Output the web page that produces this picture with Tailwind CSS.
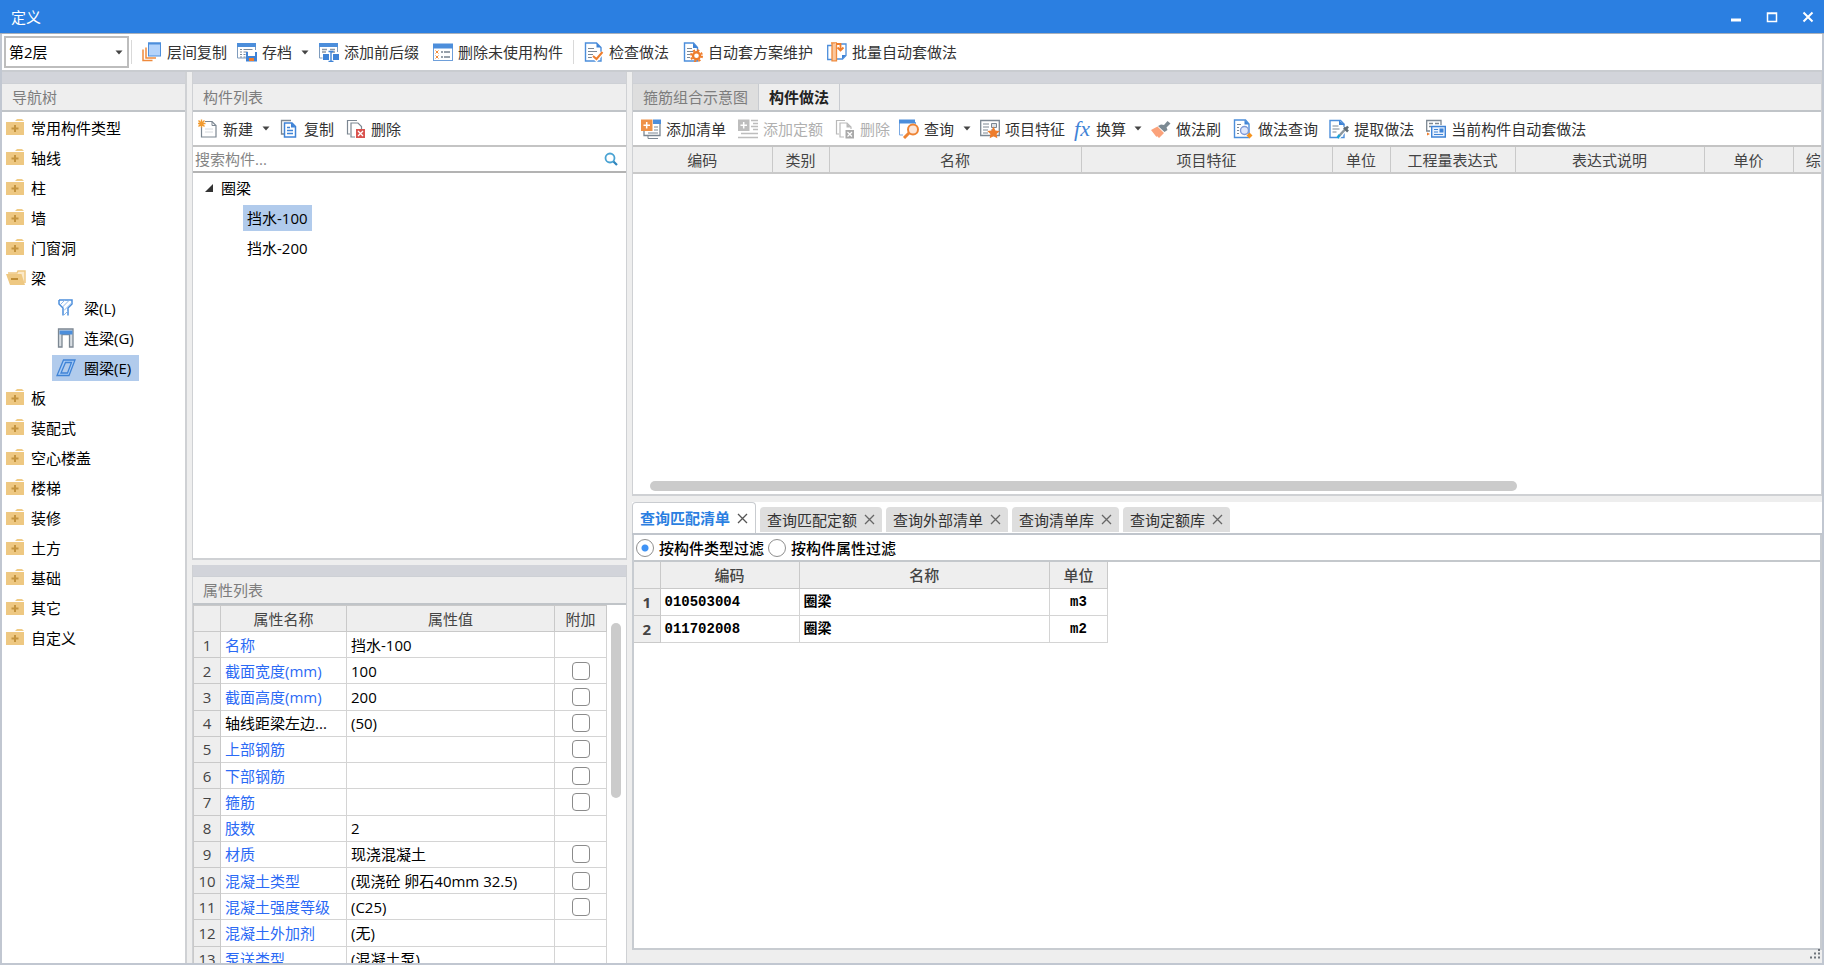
<!DOCTYPE html>
<html lang="zh-CN">
<head>
<meta charset="utf-8">
<title>定义</title>
<script src="https://cdn.jsdelivr.net/npm/@tailwindcss/browser@4"></script>
</head>
<body class="h-screen flex flex-col overflow-hidden bg-[#eeeeee] font-['Open_Sans','Noto_Sans_CJK_SC',sans-serif] text-[15px] leading-5 text-[#333333] whitespace-nowrap">

<svg class="hidden" aria-hidden="true">
  <symbol id="i-floors" viewBox="0 0 20 20"><path d="M1 7.500v11h9.500M4 5.500v10.500h10" fill="none" stroke="#ef8a3c" stroke-width="1.500"/><rect x="6.500" y="1" width="12" height="13" fill="#b3d3fb" stroke="#4c8edb"/><path d="M6 1.500h13" stroke="#4c8edb" stroke-width="2"/></symbol>
  <symbol id="i-archive" viewBox="0 0 20 20"><path d="M.5 1v15h9M18.500 1v7" fill="none" stroke="#7f9cbd"/><rect y="1" width="19" height="4" fill="#4c8edb"/><path d="M3 7.500h2M6.500 7.500h9M3 10h2M6.500 10h4M3 12.500h2M6.500 12.500h2M3 15h2M6.500 15h2" stroke="#7c8a99"/><path d="M9 10h11v9.500H9z" fill="#3f83d6"/><path d="M11 10h7v4h-7z" fill="#fff"/><path d="M12 16h5v3h-5z" fill="#ee7d2c"/></symbol>
  <symbol id="i-affix" viewBox="0 0 20 20"><path d="M.5 1v15h3M18.500 1v9" fill="none" stroke="#7f9cbd"/><rect y="1" width="19" height="4" fill="#4c8edb"/><path d="M3 7.500h5M11 7.500h5M3 10h4M12 10h4" stroke="#8d98a5" stroke-width="1.300"/><path d="M4 12h6v6H4zM14 12h6v6h-6z" fill="#3f83d6"/><path d="M12 10v9M9.500 9.500h5M9.500 19.500h5" stroke="#3f83d6" stroke-width="1.400"/></symbol>
  <symbol id="i-unused" viewBox="0 0 20 20"><rect x=".5" y="2.500" width="19" height="16" fill="#fff" stroke="#6e9fda"/><rect y="1.500" width="20" height="5" fill="#4c8edb"/><path d="m2.500 8.500 3 3m0-3-3 3m0 2 3 3m0-3-3 3" stroke="#f08a3a"/><path d="M8 10h2M11 10h6M8 15h2M11 15h6" stroke="#77828f" stroke-width="1.400"/></symbol>
  <symbol id="i-check" viewBox="0 0 20 20"><path d="M1.500 1h11l4.500 4.500V19H1.500z" fill="#fff" stroke="#4c8edb" stroke-width="1.400"/><path d="M12.500 1v4.500H17z" fill="#3f83d6"/><path d="M4 6.500h6M4 9.500h9M4 12.500h5M4 15.500h4" stroke="#7b8794"/><path d="m9 14 3.500 3.500 6-7" fill="none" stroke="#fff" stroke-width="4"/><path d="m9 14 3.500 3 6-7" fill="none" stroke="#ee7d2c" stroke-width="2"/></symbol>
  <symbol id="i-gear" viewBox="0 0 20 20"><path d="M1.500 1h9l4 4.500V19h-13z" fill="#fff" stroke="#4c8edb" stroke-width="1.400"/><path d="M10 1v5h5z" fill="#3f83d6"/><path d="M4 6.500h5M4 9.500h6M4 12.500h3M4 15.500h3" stroke="#7b8794"/><circle cx="13.500" cy="13.800" r="5.500" fill="none" stroke="#ee7d2c" stroke-width="2" stroke-dasharray="2.200 2.120"/><circle cx="13.500" cy="13.800" r="3.500" fill="#fff" stroke="#ee7d2c" stroke-width="2.400"/></symbol>
  <symbol id="i-batch" viewBox="0 0 20 20"><path d="M5 3.500H.7v14H5M9 2h10v11.500L15.500 17H9" fill="#fff" stroke="#4c8edb" stroke-width="1.300"/><path d="M15 17v-4h4z" fill="#3f83d6"/><path d="M4 .8h6M7 .8h-2v18h4.500v-16" fill="#fbc79c" stroke="#ef8a3c" stroke-width="1.300"/><path d="M9 2h4.500v5M10.500 5.500l3 3 3-3" fill="none" stroke="#ee7d2c" stroke-width="1.800"/></symbol>
  <symbol id="i-new" viewBox="0 0 20 20"><path d="M3.500 2.500H14l4 4V18H3.500z" fill="#fff" stroke="#7c8792" stroke-width="1.200"/><path d="M14 2.500v4h4" fill="none" stroke="#7c8792"/><path d="M7 10h8M7 13h8" stroke="#d6dade"/><path d="M0 1h7v6.500H0z" fill="#fff"/><path d="m.5 1.500 6 6m0-6-6 6M3.500.5v8M-.5 4.500h8" stroke="#f29a2e" stroke-width="1.400"/></symbol>
  <symbol id="i-copy" viewBox="0 0 20 20"><path d="M5 15H2.500V1.500H12" fill="none" stroke="#7c8792" stroke-width="1.300"/><path d="M5.500 4h7.500l3.500 3.500V18h-11z" fill="#fff" stroke="#3f83d6" stroke-width="1.500"/><path d="M12 3.500v5h5z" fill="#3f83d6"/><path d="M8 8.500h3M8 11.500h6M8 14.500h6" stroke="#3f83d6" stroke-width="1.300"/></symbol>
  <symbol id="i-del" viewBox="0 0 20 20"><path d="M4 15H1.500V1.500H11" fill="none" stroke="#7c8792" stroke-width="1.200"/><path d="M9 18H5V4h7l3.500 3.500V10" fill="#fff" stroke="#7c8792" stroke-width="1.200"/><path d="M10 10h9v9h-9z" fill="#d9534f"/><path d="m12 12 5 5m0-5-5 5" stroke="#fff" stroke-width="1.300"/></symbol>
  <symbol id="i-delx" viewBox="0 0 20 20"><path d="M4 15H1.500V1.500H10" fill="none" stroke="#b9b9b9" stroke-width="1.200"/><path d="M9 18H5V4h7l4 4v2" fill="#fff" stroke="#b9b9b9" stroke-width="1.200"/><path d="M11.500 4v4.500H16z" fill="#b9b9b9"/><path d="M10.500 11h8.500v8.500h-8.500z" fill="#a9a9a9"/><path d="m12.500 13 4.500 4.500m0-4.500-4.500 4.500" stroke="#fff" stroke-width="1.200"/></symbol>
  <symbol id="i-addlist" viewBox="0 0 20 20"><path d="M7 16v3.500h10" fill="none" stroke="#7c8792"/><path d="M3 11v5.500h16V4" fill="#fff" stroke="#7c8792" stroke-width="1.300"/><path d="M12 .5h8V5h-8z" fill="#4c8edb"/><path d="M13 8h4M13 11h4M7 14h10" stroke="#7c8792"/><path d="M0 .5h11.500V12H0z" fill="#ef9146"/><path d="M5.700 3v6.500M2.500 6.200H9" stroke="#fff" stroke-width="1.500"/></symbol>
  <symbol id="i-addquota" viewBox="0 0 20 20"><path d="M0 .5h11.500V12H0z" fill="#bdbdbd"/><path d="M5.700 3v6.500M2.500 6.200H9" stroke="#fff" stroke-width="1.500"/><path d="M13 1.500h7M15 4.500h5M13 7.500h7M15 10.500h5M3 14.500h17M0 18.500h20" stroke="#bdbdbd" stroke-width="1.400"/></symbol>
  <symbol id="i-query" viewBox="0 0 20 20"><path d="M.5 3v13H4M16.500 3v2" fill="none" stroke="#7aa9e3"/><path d="M0 .5h16V4.500H0z" fill="#4c8edb"/><circle cx="14" cy="10.500" r="5" fill="#fde6d8" stroke="#ee8434" stroke-width="2"/><path d="m10 14-5 5" stroke="#ee8434" stroke-width="3"/></symbol>
  <symbol id="i-feature" viewBox="0 0 20 20"><path d="M.7 1.500h18.600v15H.7z" fill="#fff" stroke="#7c8792" stroke-width="1.300"/><path d="M3 5h6M3 8h6M3 11h5M3 14h5M11 11h2" stroke="#7c8792"/><path d="M11.500 4.500h5v4h-5z" fill="#dfe3e7" stroke="#7c8792"/><path d="m13.500 7.500 1.900 3.900 4.300.6-3.100 3 .7 4.300-3.800-2-3.800 2 .7-4.300-3.100-3 4.300-.6z" fill="#ee7d2c"/></symbol>
  <symbol id="i-brush" viewBox="0 0 20 20"><path d="m16.500 2 3 2.500-4 4 1 2.500-3 2L7 7l3-1.500 3 .5z" fill="#7c8a93"/><path d="M6.500 7.500 13 14l-5 5-2-2-.5 1L0 11z" fill="#fba27a"/></symbol>
  <symbol id="i-docquery" viewBox="0 0 20 20"><path d="M1.500 1h11l3.500 4v13.500H1.500z" fill="#fff" stroke="#4c8edb" stroke-width="1.400"/><path d="M11.500 1v4.500H16z" fill="#3f83d6"/><path d="M4 5.500h4M4 8.500h2M4 11.500h2M4 14.500h2" stroke="#7b8794"/><circle cx="11.500" cy="11.500" r="4" fill="#dfe7fb" stroke="#7f9ad8" stroke-width="1.400"/><path d="m16.500 13.500 3 3-3 3-3-3z" fill="#f6931e"/></symbol>
  <symbol id="i-extract" viewBox="0 0 20 20"><path d="M1 1.500h10.500L15 5v13.500H1z" fill="#fff" stroke="#4c8edb" stroke-width="1.400"/><path d="M10 1.500V6h6z" fill="#3f83d6"/><path d="M3.500 7h6M3.500 10h7M3.500 13h4" stroke="#7b8794"/><path d="m9 18 8-9" stroke="#fff" stroke-width="5"/><path d="m10 17 6-6.500" stroke="#8c979f" stroke-width="2.500"/><path d="m15 8.500 4 4M17 10l2-2.500" stroke="#5f6b74" stroke-width="2.500"/><path d="m8.500 19 2-3" stroke="#19a5d8" stroke-width="2.500"/></symbol>
  <symbol id="i-auto" viewBox="0 0 20 20"><path d="M4 12H.7V1.500H15V6" fill="#fff" stroke="#7c8792" stroke-width="1.300"/><path d="M3 4.500h4M3 7.500h2M9 4.500h4" stroke="#7c8792" stroke-width="1.500"/><path d="M5.700 7.500h13.600V18H5.700z" fill="#e8f1fd" stroke="#3f83d6" stroke-width="1.400"/><path d="M8 10.500h4M8 13h4M8 15.500h9" stroke="#3f83d6"/><path d="M13.500 9.500h4v4h-4z" fill="#3f83d6"/><path d="m1 13.500 3 1.500-3 1.500z" fill="#ee7d2c"/></symbol>
  <symbol id="i-folder" viewBox="0 0 20 20"><path d="M9 3 11 1h5l2 2z" fill="#f0cb84"/><path d="M0 4h18v13H0z" fill="#eec882"/><path d="M9 7v7M5.500 10.500h7" stroke="#c4943f" stroke-width="2"/></symbol>
  <symbol id="i-folder-open" viewBox="0 0 20 20"><path d="M2 5h9l1-2h7v12" fill="#fbe9c8" stroke="#eec882" stroke-width="1.500"/><path d="M0 6h15.500L19 17H4z" fill="#eec882"/><path d="M5 11h7" stroke="#bf8d35" stroke-width="2"/></symbol>
  <symbol id="i-beam" viewBox="0 0 20 20"><path d="M3 2h13v4l-4 4v7.500M3 2v4l4 4v7.500" fill="none" stroke="#4c8edb" stroke-width="1.500"/><path d="m4 7 5-5M6.500 9l7-7M8 12.500l8-8M8 17l4-4" stroke="#8db8ea"/></symbol>
  <symbol id="i-link" viewBox="0 0 20 20"><path d="M2.500 1h14.500v18h-3.500V6.500H6V19H2.500z" fill="#d9dee3" stroke="#7c8792" stroke-width="1.300"/><path d="M3.500 2.500h13v4h-13z" fill="#4c8edb"/></symbol>
  <symbol id="i-ring" viewBox="0 0 20 20"><path d="M7.500 2h11.500l-6 15.500H1zM9.500 4.500h6l-4 10.500H5z" fill="#a9cdf7" fill-rule="evenodd" stroke="#3f83d6" stroke-width="1.300"/></symbol>
  <symbol id="i-arrow" viewBox="0 0 8 5"><path d="M.5.500h7L4 4.500z" fill="#444"/></symbol>
  <symbol id="i-x" viewBox="0 0 11 11"><path d="m1 1 9 9m0-9-9 9" stroke="currentColor" stroke-width="1.300"/></symbol>
</svg>

<header class="flex h-[34px] shrink-0 items-center justify-between border-b border-[#a9b0ba] bg-[#2b7fe1] pl-[11px] pr-2.5 text-white">
  <h1>定义</h1>
  <div class="flex items-center gap-6">
    <button aria-label="最小化"><svg class="size-3" viewBox="0 0 12 12"><path d="M1 9h10" stroke="#fff" stroke-width="3"/></svg></button>
    <button aria-label="最大化"><svg class="size-3" viewBox="0 0 12 12"><path d="M1.500 2h9v8.500h-9zM1 2.500h10" fill="none" stroke="#fff" stroke-width="1.500"/></svg></button>
    <button aria-label="关闭"><svg class="size-3" viewBox="0 0 12 12"><path d="m1.500 1.500 9 9m0-9-9 9" stroke="#fff" stroke-width="2"/></svg></button>
  </div>
</header>

<div class="flex min-h-0 flex-1 flex-col border-x-2 border-b-2 border-[#c1c7d1]">
  <div class="flex h-[38px] shrink-0 items-center border-b-2 border-[#c9ccd0] bg-white pl-0.5">
    <div class="relative">
      <select aria-label="楼层" class="h-8 w-[125px] appearance-none border-2 border-[#bdbdbd] bg-white pl-[3px] text-black"><option>第2层</option></select>
      <svg class="pointer-events-none absolute right-1.5 top-3.5 h-[5px] w-2"><use href="#i-arrow"/></svg>
    </div>
    <span class="ml-0.5 mr-1 h-6 w-px bg-[#d9d9d9]"></span>
    <div class="flex items-center gap-0.5">
      <button class="flex items-center gap-[5px] px-1.5"><svg class="size-5"><use href="#i-floors"/></svg>层间复制</button>
      <button class="flex items-center gap-[5px] px-0.5"><svg class="size-5"><use href="#i-archive"/></svg>存档<svg class="ml-1 h-[5px] w-2"><use href="#i-arrow"/></svg></button>
      <button class="flex items-center gap-[5px] px-1.5"><svg class="size-5"><use href="#i-affix"/></svg>添加前后缀</button>
      <button class="flex items-center gap-[5px] px-1.5"><svg class="size-5"><use href="#i-unused"/></svg>删除未使用构件</button>
    </div>
    <span class="mx-1 h-6 w-px bg-[#d9d9d9]"></span>
    <div class="flex items-center gap-0.5">
      <button class="flex items-center gap-[5px] px-1.5"><svg class="size-5"><use href="#i-check"/></svg>检查做法</button>
      <button class="flex items-center gap-[5px] px-1.5"><svg class="size-5"><use href="#i-gear"/></svg>自动套方案维护</button>
      <button class="flex items-center gap-[5px] px-1.5"><svg class="size-5"><use href="#i-batch"/></svg>批量自动套做法</button>
    </div>
  </div>

  <main class="flex min-h-0 flex-1 gap-[5px]">
    <nav class="flex w-[185px] shrink-0 flex-col border-r-2 border-[#cfd1d4]">
      <div class="h-3 shrink-0 border-b border-[#cdd0d5] bg-[#d2d4da]"></div>
      <h2 class="h-7 shrink-0 border-b-2 border-[#c0c4c8] pl-2.5 leading-[26px] text-[#7d7d7d]">导航树</h2>
      <ul class="min-h-0 flex-1 overflow-hidden bg-white pt-px text-black">
        <li class="flex h-[30px] items-center gap-[5px] pl-1"><svg class="size-5"><use href="#i-folder"/></svg>常用构件类型</li>
        <li class="flex h-[30px] items-center gap-[5px] pl-1"><svg class="size-5"><use href="#i-folder"/></svg>轴线</li>
        <li class="flex h-[30px] items-center gap-[5px] pl-1"><svg class="size-5"><use href="#i-folder"/></svg>柱</li>
        <li class="flex h-[30px] items-center gap-[5px] pl-1"><svg class="size-5"><use href="#i-folder"/></svg>墙</li>
        <li class="flex h-[30px] items-center gap-[5px] pl-1"><svg class="size-5"><use href="#i-folder"/></svg>门窗洞</li>
        <li>
          <div class="flex h-[30px] items-center gap-[5px] pl-1"><svg class="size-5"><use href="#i-folder-open"/></svg>梁</div>
          <ul class="pl-[50px]">
            <li class="flex h-[30px] items-center"><span class="flex h-[26px] items-center gap-2 pl-1 pr-2"><svg class="size-5"><use href="#i-beam"/></svg>梁(L)</span></li>
            <li class="flex h-[30px] items-center"><span class="flex h-[26px] items-center gap-2 pl-1 pr-2"><svg class="size-5"><use href="#i-link"/></svg>连梁(G)</span></li>
            <li class="flex h-[30px] items-center"><span class="flex h-[26px] items-center gap-2 bg-[#b1cbec] pl-1 pr-2"><svg class="size-5"><use href="#i-ring"/></svg>圈梁(E)</span></li>
          </ul>
        </li>
        <li class="flex h-[30px] items-center gap-[5px] pl-1"><svg class="size-5"><use href="#i-folder"/></svg>板</li>
        <li class="flex h-[30px] items-center gap-[5px] pl-1"><svg class="size-5"><use href="#i-folder"/></svg>装配式</li>
        <li class="flex h-[30px] items-center gap-[5px] pl-1"><svg class="size-5"><use href="#i-folder"/></svg>空心楼盖</li>
        <li class="flex h-[30px] items-center gap-[5px] pl-1"><svg class="size-5"><use href="#i-folder"/></svg>楼梯</li>
        <li class="flex h-[30px] items-center gap-[5px] pl-1"><svg class="size-5"><use href="#i-folder"/></svg>装修</li>
        <li class="flex h-[30px] items-center gap-[5px] pl-1"><svg class="size-5"><use href="#i-folder"/></svg>土方</li>
        <li class="flex h-[30px] items-center gap-[5px] pl-1"><svg class="size-5"><use href="#i-folder"/></svg>基础</li>
        <li class="flex h-[30px] items-center gap-[5px] pl-1"><svg class="size-5"><use href="#i-folder"/></svg>其它</li>
        <li class="flex h-[30px] items-center gap-[5px] pl-1"><svg class="size-5"><use href="#i-folder"/></svg>自定义</li>
      </ul>
    </nav>

    <div class="flex w-[435px] shrink-0 flex-col gap-[5px]">
      <section class="flex min-h-0 flex-1 flex-col border-x border-b-2 border-[#cfd1d4]">
        <div class="h-3 shrink-0 border-b border-[#cdd0d5] bg-[#d2d4da]"></div>
        <h2 class="h-7 shrink-0 border-b-2 border-[#c0c4c8] pl-2.5 leading-[26px] text-[#7d7d7d]">构件列表</h2>
        <div class="flex h-[35px] shrink-0 items-center gap-0.5 border-b-2 border-[#c4c4c4] bg-white pl-[3px]">
          <button class="flex items-center gap-[5px] px-0.5"><svg class="size-5"><use href="#i-new"/></svg>新建<svg class="ml-1 h-[5px] w-2"><use href="#i-arrow"/></svg></button>
          <button class="flex items-center gap-[5px] px-[5px]"><svg class="size-5"><use href="#i-copy"/></svg>复制</button>
          <button class="flex items-center gap-[5px] px-[5px]"><svg class="size-5"><use href="#i-del"/></svg>删除</button>
        </div>
        <label class="flex h-[26px] shrink-0 items-center border-b-2 border-[#b3b3b3] bg-white pl-0.5 pr-2">
          <input type="text" aria-label="搜索构件" placeholder="搜索构件..." class="min-w-0 flex-1 outline-none placeholder:text-[#858585]">
          <svg class="size-[14px]" viewBox="0 0 14 14"><circle cx="6" cy="6" r="4.500" fill="none" stroke="#4aa3d3" stroke-width="1.800"/><path d="m9.500 9.500 3.500 3.500" stroke="#2f86bd" stroke-width="2.200"/></svg>
        </label>
        <ul class="min-h-0 flex-1 bg-white text-black">
          <li class="flex h-[30px] items-center gap-2 pl-3"><svg class="size-2" viewBox="0 0 8 8"><path d="M8 0v8H0z" fill="#333"/></svg>圈梁</li>
          <li class="flex h-[30px] items-center pl-[50px]"><span class="bg-[#b1cbec] px-1 leading-[26px]">挡水-100</span></li>
          <li class="flex h-[30px] items-center pl-[50px]"><span class="px-1 leading-[26px]">挡水-200</span></li>
        </ul>
      </section>

      <section class="flex h-[398px] shrink-0 flex-col border-x border-[#cfd1d4]">
        <div class="h-3 shrink-0 border-b border-[#cdd0d5] bg-[#d2d4da]"></div>
        <h2 class="h-7 shrink-0 border-b-2 border-[#c0c4c8] pl-2.5 leading-[26px] text-[#7d7d7d]">属性列表</h2>
        <div class="flex min-h-0 flex-1 overflow-hidden bg-white">
          <table class="h-[368px] flex-1 table-fixed border-collapse text-black [&_td]:h-[26px] [&_td]:border [&_td]:border-[#d4d4d4] [&_td]:px-1 [&_th]:h-[26px] [&_th]:border [&_th]:border-[#c9c9c9] [&_th]:bg-[#eeeeee] [&_th]:p-0 [&_th]:font-normal [&_th]:text-[#444444] [&_tr>*:last-child]:text-center [&_input]:block [&_input]:mx-auto [&_input]:size-[18px] [&_input]:appearance-none [&_input]:rounded [&_input]:border-[1.5px] [&_input]:border-[#8b8b8b] [&_tbody_tr>*:nth-child(2)]:text-[#2b6af5]">
            <colgroup><col class="w-[27px]"><col class="w-[126px]"><col><col class="w-[52px]"></colgroup>
            <thead><tr><th></th><th>属性名称</th><th>属性值</th><th>附加</th></tr></thead>
            <tbody>
              <tr><th>1</th><td>名称</td><td>挡水-100</td><td></td></tr>
              <tr><th>2</th><td>截面宽度(mm)</td><td>100</td><td><input type="checkbox" aria-label="附加 截面宽度"></td></tr>
              <tr><th>3</th><td>截面高度(mm)</td><td>200</td><td><input type="checkbox" aria-label="附加 截面高度"></td></tr>
              <tr><th>4</th><td><span class="text-black">轴线距梁左边...</span></td><td>(50)</td><td><input type="checkbox" aria-label="附加 轴线距梁左边"></td></tr>
              <tr><th>5</th><td>上部钢筋</td><td></td><td><input type="checkbox" aria-label="附加 上部钢筋"></td></tr>
              <tr><th>6</th><td>下部钢筋</td><td></td><td><input type="checkbox" aria-label="附加 下部钢筋"></td></tr>
              <tr><th>7</th><td>箍筋</td><td></td><td><input type="checkbox" aria-label="附加 箍筋"></td></tr>
              <tr><th>8</th><td>肢数</td><td>2</td><td></td></tr>
              <tr><th>9</th><td>材质</td><td>现浇混凝土</td><td><input type="checkbox" aria-label="附加 材质"></td></tr>
              <tr><th>10</th><td>混凝土类型</td><td>(现浇砼 卵石40mm 32.5)</td><td><input type="checkbox" aria-label="附加 混凝土类型"></td></tr>
              <tr><th>11</th><td>混凝土强度等级</td><td>(C25)</td><td><input type="checkbox" aria-label="附加 混凝土强度等级"></td></tr>
              <tr><th>12</th><td>混凝土外加剂</td><td>(无)</td><td></td></tr>
              <tr><th>13</th><td>泵送类型</td><td>(混凝土泵)</td><td></td></tr>
            </tbody>
          </table>
          <div class="w-[19px] shrink-0 px-1 pt-[18px]"><div class="h-[175px] w-2.5 rounded-full bg-[#cbcbcb]"></div></div>
        </div>
      </section>
    </div>

    <div class="flex min-w-0 flex-1 flex-col">
      <section class="flex h-[424px] shrink-0 flex-col border-x border-b-2 border-[#cfd1d4]">
        <div class="h-3 shrink-0 border-b border-[#cdd0d5] bg-[#d2d4da]"></div>
        <div class="flex h-7 shrink-0 border-b-2 border-[#c0c4c8]" role="tablist">
          <button role="tab" class="border-r border-[#c8cbd0] bg-[#dedede] px-2.5 text-[#7d7d7d]">箍筋组合示意图</button>
          <button role="tab" aria-selected="true" class="border-r border-[#c8cbd0] px-2.5 font-bold text-[#222222]">构件做法</button>
        </div>
        <div class="flex h-[35px] shrink-0 items-center gap-0.5 border-b-2 border-[#c4c4c4] bg-white pl-[3px]">
          <button class="flex items-center gap-[5px] px-[5px]"><svg class="size-5"><use href="#i-addlist"/></svg>添加清单</button>
          <button disabled class="flex items-center gap-[5px] px-[5px] text-[#b0b0b0]"><svg class="size-5"><use href="#i-addquota"/></svg>添加定额</button>
          <button disabled class="flex items-center gap-[5px] px-[5px] text-[#b0b0b0]"><svg class="size-5"><use href="#i-delx"/></svg>删除</button>
          <button class="flex items-center gap-[5px] px-0.5"><svg class="size-5"><use href="#i-query"/></svg>查询<svg class="ml-1 h-[5px] w-2"><use href="#i-arrow"/></svg></button>
          <button class="flex items-center gap-[5px] px-[5px]"><svg class="size-5"><use href="#i-feature"/></svg>项目特征</button>
          <button class="flex items-center gap-1 px-0.5"><span class="w-[18px] text-left font-['Liberation_Serif',serif] text-[22px] italic text-[#3f83d6]">fx</span>换算<svg class="ml-1 h-[5px] w-2"><use href="#i-arrow"/></svg></button>
          <button class="flex items-center gap-[5px] px-[5px]"><svg class="size-5"><use href="#i-brush"/></svg>做法刷</button>
          <button class="flex items-center gap-[5px] px-[5px]"><svg class="size-5"><use href="#i-docquery"/></svg>做法查询</button>
          <button class="flex items-center gap-[5px] px-1"><svg class="size-5"><use href="#i-extract"/></svg>提取做法</button>
          <button class="flex items-center gap-[5px] px-1.5"><svg class="size-5"><use href="#i-auto"/></svg>当前构件自动套做法</button>
        </div>
        <div class="min-h-0 flex-1 overflow-hidden bg-white">
          <table class="w-[1246px] table-fixed border-collapse [&_th]:h-[26px] [&_th]:border-r [&_th]:border-b-2 [&_th]:border-[#c9c9c9] [&_th]:bg-[#eeeeee] [&_th]:p-0 [&_th]:font-normal [&_th]:text-[#444444]">
            <colgroup><col class="w-[139px]"><col class="w-[57px]"><col class="w-[252px]"><col class="w-[251px]"><col class="w-[58px]"><col class="w-[125px]"><col class="w-[189px]"><col class="w-[89px]"><col></colgroup>
            <thead><tr><th>编码</th><th>类别</th><th>名称</th><th>项目特征</th><th>单位</th><th>工程量表达式</th><th>表达式说明</th><th>单价</th><th>综合单价</th></tr></thead>
          </table>
        </div>
        <div class="h-[13px] shrink-0 bg-white pl-[17px]"><div class="h-2.5 w-[74%] rounded-full bg-[#cbcbcb]"></div></div>
      </section>

      <div class="mt-1.5 flex h-[33px] shrink-0 items-end gap-1 border-b-2 border-[#c0c5cc] bg-white" role="tablist">
        <div class="flex h-[31px] items-center rounded-t border border-b-0 border-[#c9ccd0] bg-white px-[7px] gap-[7px]"><button role="tab" aria-selected="true" class="font-bold text-[#2b7fe1]">查询匹配清单</button><button aria-label="关闭查询匹配清单" class="text-[#555555]"><svg class="size-[11px]"><use href="#i-x"/></svg></button></div>
        <div class="mb-px flex h-[25px] items-center gap-[7px] rounded-t bg-[#dedede] px-[7px]"><button role="tab" class="text-[#333333]">查询匹配定额</button><button aria-label="关闭查询匹配定额" class="text-[#666666]"><svg class="size-[11px]"><use href="#i-x"/></svg></button></div>
        <div class="mb-px flex h-[25px] items-center gap-[7px] rounded-t bg-[#dedede] px-[7px]"><button role="tab" class="text-[#333333]">查询外部清单</button><button aria-label="关闭查询外部清单" class="text-[#666666]"><svg class="size-[11px]"><use href="#i-x"/></svg></button></div>
        <div class="mb-px flex h-[25px] items-center gap-[7px] rounded-t bg-[#dedede] px-[7px]"><button role="tab" class="text-[#333333]">查询清单库</button><button aria-label="关闭查询清单库" class="text-[#666666]"><svg class="size-[11px]"><use href="#i-x"/></svg></button></div>
        <div class="mb-px flex h-[25px] items-center gap-[7px] rounded-t bg-[#dedede] px-[7px]"><button role="tab" class="text-[#333333]">查询定额库</button><button aria-label="关闭查询定额库" class="text-[#666666]"><svg class="size-[11px]"><use href="#i-x"/></svg></button></div>
      </div>
      <section class="flex min-h-0 flex-1 flex-col border-x-2 border-b-2 border-[#c8ccd1] bg-white">
        <div class="flex h-[27px] shrink-0 items-center gap-1 border-b-2 border-[#c4c8cc] pl-0.5 font-medium text-black">
          <label class="flex items-center gap-[5px]"><input type="radio" name="filter" checked class="size-[18px] appearance-none rounded-full border border-[#8f8f8f] bg-white checked:bg-[radial-gradient(circle,#3f93f5_3px,transparent_4px)]">按构件类型过滤</label>
          <label class="flex items-center gap-[5px]"><input type="radio" name="filter" class="size-[18px] appearance-none rounded-full border border-[#8f8f8f] bg-white">按构件属性过滤</label>
        </div>
        <table class="w-[474px] table-fixed border-collapse text-black [&_td]:h-[27px] [&_td]:border [&_td]:border-[#d4d4d4] [&_td]:px-1 [&_td]:py-0 [&_td]:font-['Liberation_Mono','Noto_Sans_CJK_SC',monospace] [&_td]:text-[14px] [&_td]:font-bold [&_th]:h-[26px] [&_th]:border [&_th]:border-t-0 [&_th]:border-l-0 [&_th]:border-[#c9c9c9] [&_th]:bg-[#eeeeee] [&_th]:p-0 [&_th]:text-[#444444]">
          <colgroup><col class="w-[26px]"><col class="w-[139px]"><col><col class="w-[58px]"></colgroup>
          <thead class="[&_th]:font-medium"><tr><th></th><th>编码</th><th>名称</th><th>单位</th></tr></thead>
          <tbody>
            <tr><th>1</th><td>010503004</td><td>圈梁</td><td class="text-center">m3</td></tr>
            <tr><th>2</th><td>011702008</td><td>圈梁</td><td class="text-center">m2</td></tr>
          </tbody>
        </table>
      </section>
      <footer class="flex h-[13px] shrink-0 items-end justify-end pb-1 pr-0.5">
        <svg class="size-[10px]" viewBox="0 0 10 10" fill="#6f747b"><path d="M0 7.500h2v2H0zM4 7.500h2v2H4zM8 7.500h2v2H8zM4 3.500h2v2H4zM8 3.500h2v2H8zM8 0h2v2H8z"/></svg>
      </footer>
    </div>
  </main>
</div>
</body>
</html>
